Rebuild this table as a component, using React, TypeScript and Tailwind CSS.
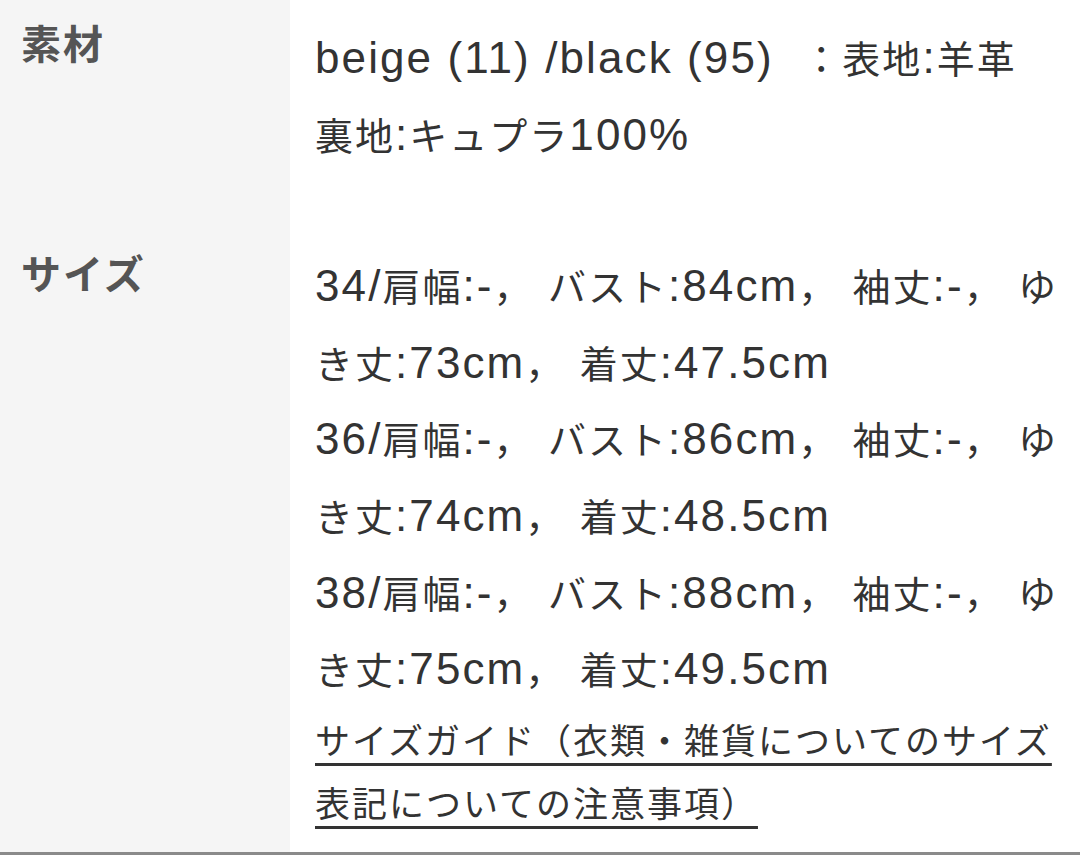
import React from "react";

const LATIN_SPLIT = /([\x20-\x7e]+)/;
const LATIN_ONLY = /^[\x20-\x7e]+$/;

function Txt({ s }: { s: string }) {
  return (
    <>
      {s
        .split(LATIN_SPLIT)
        .filter((p) => p.length > 0)
        .map((p, i) =>
          LATIN_ONLY.test(p) ? (
            <span
              key={i}
              className="font-['Liberation_Sans',sans-serif] text-[44px] leading-[40px] tracking-[2.1px] whitespace-pre"
            >
              {p}
            </span>
          ) : (
            <span key={i}>{p}</span>
          )
        )}
    </>
  );
}

function Line({ s }: { s: string }) {
  return (
    <div className="whitespace-nowrap">
      <Txt s={s} />
    </div>
  );
}

export default function App() {
  const sizeLines = [
    "34/肩幅:-， バスト:84cm， 袖丈:-， ゆ",
    "き丈:73cm， 着丈:47.5cm",
    "36/肩幅:-， バスト:86cm， 袖丈:-， ゆ",
    "き丈:74cm， 着丈:48.5cm",
    "38/肩幅:-， バスト:88cm， 袖丈:-， ゆ",
    "き丈:75cm， 着丈:49.5cm",
  ];

  return (
    <div className="w-[1080px] h-[855px] overflow-hidden bg-white font-['Noto_Sans_CJK_JP',sans-serif]">
      <div className="grid grid-cols-[290px_1fr] content-start border-b-[3px] border-[#8a8a8a] h-[855px]">
        {/* Row 1 label */}
        <div className="bg-[#f5f5f5] pl-[21px] pt-[14px]">
          <div className="text-[40px] leading-[57px] tracking-[2px] font-bold text-[#555555]">素材</div>
        </div>
        {/* Row 1 value */}
        <div className="pl-[25px] pt-[19px] pb-[56px] text-[38px] leading-[76.6px] tracking-[2px] text-[#333333]">
          <Line s="beige (11) /black (95)  ：表地:羊革" />
          <Line s="裏地:キュプラ100%" />
        </div>

        {/* Row 2 label */}
        <div className="bg-[#f5f5f5] pl-[21px] pt-[16px]">
          <div className="text-[40px] leading-[57px] tracking-[2px] font-bold text-[#555555]">サイズ</div>
        </div>
        {/* Row 2 value */}
        <div className="pl-[25px] pt-[19px] pb-[19px] text-[38px] leading-[76.6px] tracking-[2px] text-[#333333]">
          {sizeLines.map((l, i) => (
            <Line key={i} s={l} />
          ))}
          <div className="text-[35px] leading-[63px] tracking-[2px]">
            <a
              href="#"
              className="text-[#333333] underline decoration-[3px] underline-offset-[9px] decoration-[#333333]"
            >
              サイズガイド（衣類・雑貨についてのサイズ
              <br />
              表記についての注意事項）
            </a>
          </div>
        </div>
      </div>
    </div>
  );
}
